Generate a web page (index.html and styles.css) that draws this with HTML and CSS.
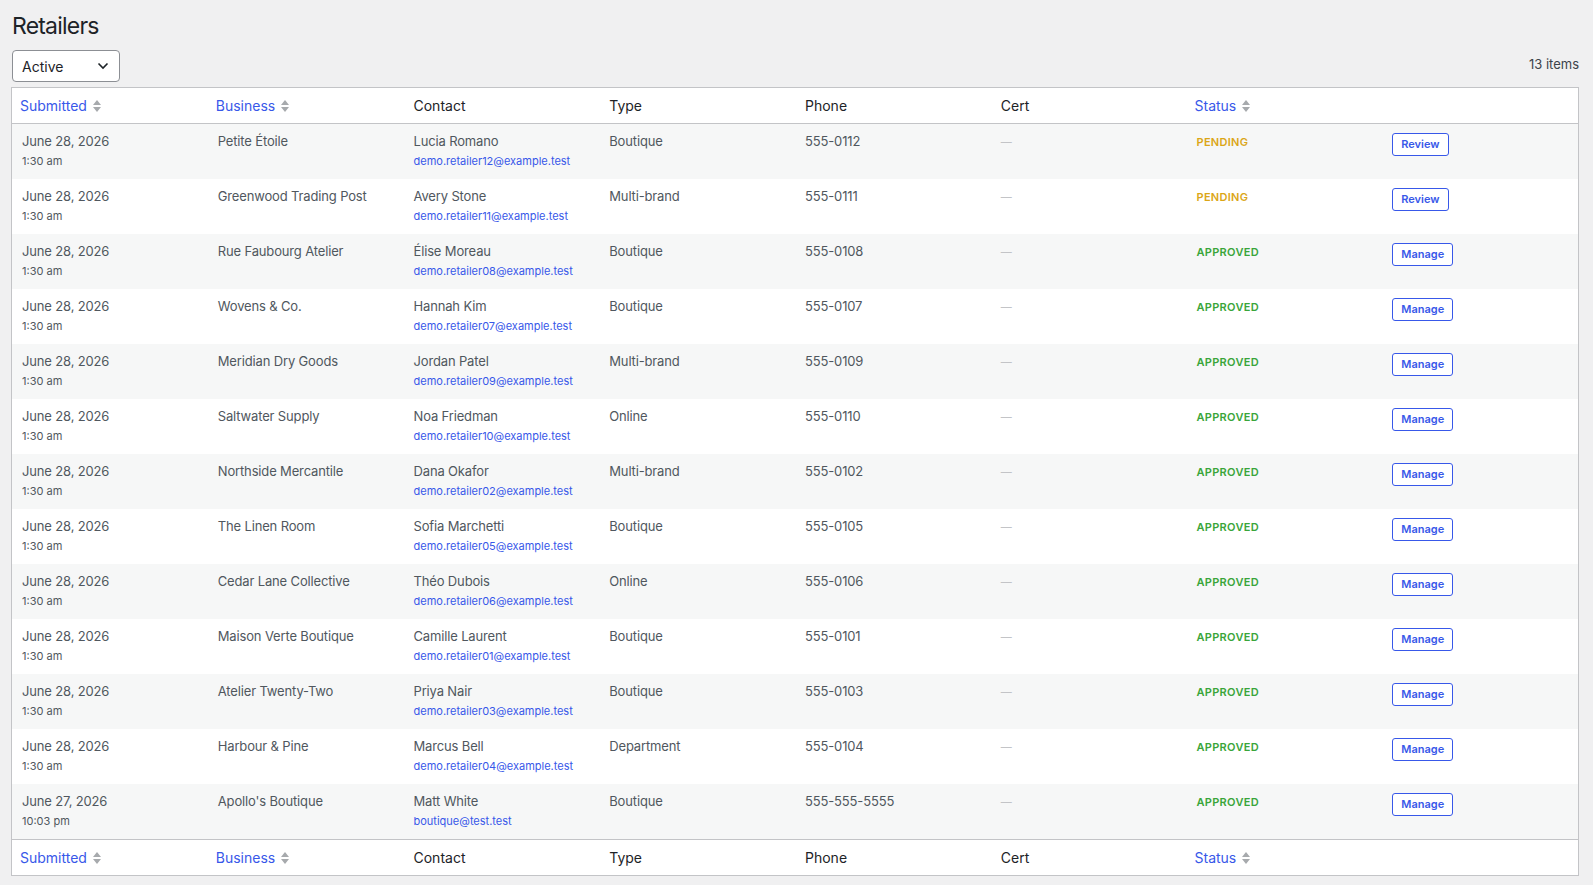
FILE: index.html
```html
<!DOCTYPE html>
<html lang="en">
<head>
    <meta charset="UTF-8">
    <title>Retailers</title>
    <link rel="stylesheet" href="styles.css">
</head>
<body>
    <div class="wrap">
        <h1>Retailers</h1>

        <div class="toolbar">
            <div class="select">
                <span>Active</span>
                <svg width="12" height="8" viewBox="0 0 12 8"><path d="M1.5 1.5 L6 6 L10.5 1.5" fill="none" stroke="#1d2327" stroke-width="1.6"/></svg>
            </div>
            <div class="count">13 items</div>
        </div>

        <table class="list">
            <thead>
                <tr>
                    <th class="sortable"><a href="#">Submitted <svg class="sort" width="8" height="12" viewBox="0 0 8 12"><path d="M4 0 L8 5 L0 5 Z M0 7 L8 7 L4 12 Z" fill="#a7aaad"/></svg></a></th>
                    <th class="sortable"><a href="#">Business <svg class="sort" width="8" height="12" viewBox="0 0 8 12"><path d="M4 0 L8 5 L0 5 Z M0 7 L8 7 L4 12 Z" fill="#a7aaad"/></svg></a></th>
                    <th>Contact</th>
                    <th>Type</th>
                    <th>Phone</th>
                    <th>Cert</th>
                    <th class="sortable"><a href="#">Status <svg class="sort" width="8" height="12" viewBox="0 0 8 12"><path d="M4 0 L8 5 L0 5 Z M0 7 L8 7 L4 12 Z" fill="#a7aaad"/></svg></a></th>
                    <th></th>
                </tr>
            </thead>
            <tbody id="rows"></tbody>
            <tfoot>
                <tr>
                    <th class="sortable"><a href="#">Submitted <svg class="sort" width="8" height="12" viewBox="0 0 8 12"><path d="M4 0 L8 5 L0 5 Z M0 7 L8 7 L4 12 Z" fill="#a7aaad"/></svg></a></th>
                    <th class="sortable"><a href="#">Business <svg class="sort" width="8" height="12" viewBox="0 0 8 12"><path d="M4 0 L8 5 L0 5 Z M0 7 L8 7 L4 12 Z" fill="#a7aaad"/></svg></a></th>
                    <th>Contact</th>
                    <th>Type</th>
                    <th>Phone</th>
                    <th>Cert</th>
                    <th class="sortable"><a href="#">Status <svg class="sort" width="8" height="12" viewBox="0 0 8 12"><path d="M4 0 L8 5 L0 5 Z M0 7 L8 7 L4 12 Z" fill="#a7aaad"/></svg></a></th>
                    <th></th>
                </tr>
            </tfoot>
        </table>
    </div>

    <script>
        const retailers = [
            ['June 28, 2026', '1:30 am', 'Petite Étoile', 'Lucia Romano', 'demo.retailer12@example.test', 'Boutique', '555-0112', 'pending'],
            ['June 28, 2026', '1:30 am', 'Greenwood Trading Post', 'Avery Stone', 'demo.retailer11@example.test', 'Multi-brand', '555-0111', 'pending'],
            ['June 28, 2026', '1:30 am', 'Rue Faubourg Atelier', 'Élise Moreau', 'demo.retailer08@example.test', 'Boutique', '555-0108', 'approved'],
            ['June 28, 2026', '1:30 am', 'Wovens &amp; Co.', 'Hannah Kim', 'demo.retailer07@example.test', 'Boutique', '555-0107', 'approved'],
            ['June 28, 2026', '1:30 am', 'Meridian Dry Goods', 'Jordan Patel', 'demo.retailer09@example.test', 'Multi-brand', '555-0109', 'approved'],
            ['June 28, 2026', '1:30 am', 'Saltwater Supply', 'Noa Friedman', 'demo.retailer10@example.test', 'Online', '555-0110', 'approved'],
            ['June 28, 2026', '1:30 am', 'Northside Mercantile', 'Dana Okafor', 'demo.retailer02@example.test', 'Multi-brand', '555-0102', 'approved'],
            ['June 28, 2026', '1:30 am', 'The Linen Room', 'Sofia Marchetti', 'demo.retailer05@example.test', 'Boutique', '555-0105', 'approved'],
            ['June 28, 2026', '1:30 am', 'Cedar Lane Collective', 'Théo Dubois', 'demo.retailer06@example.test', 'Online', '555-0106', 'approved'],
            ['June 28, 2026', '1:30 am', 'Maison Verte Boutique', 'Camille Laurent', 'demo.retailer01@example.test', 'Boutique', '555-0101', 'approved'],
            ['June 28, 2026', '1:30 am', 'Atelier Twenty-Two', 'Priya Nair', 'demo.retailer03@example.test', 'Boutique', '555-0103', 'approved'],
            ['June 28, 2026', '1:30 am', 'Harbour &amp; Pine', 'Marcus Bell', 'demo.retailer04@example.test', 'Department', '555-0104', 'approved'],
            ['June 27, 2026', '10:03 pm', "Apollo's Boutique", 'Matt White', 'boutique@test.test', 'Boutique', '555-555-5555', 'approved']
        ];

        const tbody = document.getElementById('rows');
        tbody.innerHTML = retailers.map(r => `
            <tr>
                <td>${r[0]}<div class="sub">${r[1]}</div></td>
                <td>${r[2]}</td>
                <td>${r[3]}<div class="sub"><a class="email" href="#">${r[4]}</a></div></td>
                <td>${r[5]}</td>
                <td>${r[6]}</td>
                <td><span class="dash">—</span></td>
                <td><span class="status ${r[7]}">${r[7]}</span></td>
                <td><a class="btn" href="#">${r[7] === 'pending' ? 'Review' : 'Manage'}</a></td>
            </tr>`).join('');
    </script>
</body>
</html>
```

FILE: styles.css
```css
:root {
    --link: #3858e9;
    --text: #50575e;
    --heading: #1d2327;
    --border: #c3c4c7;
}

body {
    margin: 0;
    background: #f0f0f1;
    font-family: Inter, 'Noto Sans', sans-serif;
    color: var(--text);
}

.wrap {
    padding: 0 14px 0 11px;
}

h1 {
    margin: 0;
    padding: 11px 0 0 1px;
    font-size: 23px;
    font-weight: 400;
    line-height: 30px;
    letter-spacing: -0.8px;
    color: var(--heading);
}

.toolbar {
    display: flex;
    justify-content: space-between;
    align-items: center;
    margin-top: 9px;
    margin-bottom: 5px;
}

.select {
    display: flex;
    justify-content: space-between;
    align-items: center;
    box-sizing: border-box;
    width: 108px;
    height: 32px;
    margin-left: 1px;
    padding: 0 10px 0 9px;
    background: #fff;
    border: 1px solid #8c8f94;
    border-radius: 4px;
    font-size: 14px;
    color: var(--heading);
}

.count {
    font-size: 13px;
    color: #3c434a;
    margin-top: -4px;
}

.list {
    width: 100%;
    table-layout: fixed;
    border-spacing: 0;
    background: #fff;
    border: 1px solid var(--border);
}

.list th {
    text-align: left;
    font-weight: 400;
    font-size: 14px;
    line-height: 19px;
    color: var(--heading);
    padding: 8px 10px;
}

.list thead th {
    border-bottom: 1px solid var(--border);
}

.list tfoot th {
    border-top: 1px solid var(--border);
}

.list th.sortable {
    padding: 8px;
}

.list th a {
    color: var(--link);
    text-decoration: none;
    display: inline-flex;
    align-items: center;
    gap: 6px;
}

.sort {
    margin-top: 1px;
}

.list td {
    height: 55px;
    box-sizing: border-box;
    vertical-align: top;
    padding: 8px 10px 0;
    font-size: 13px;
    line-height: 19.5px;
    letter-spacing: -0.15px;
}

.list tbody tr:nth-child(odd) td {
    background: #f6f7f7;
}

.sub {
    font-size: 11px;
    line-height: 18px;
    letter-spacing: 0;
}

.email {
    color: var(--link);
    text-decoration: none;
}

.dash {
    color: var(--border);
    font-size: 11px;
}

.status {
    text-transform: uppercase;
    font-size: 11px;
    font-weight: 600;
    letter-spacing: 0.3px;
}

.status.pending {
    color: #dba617;
}

.status.approved {
    color: #3aa53a;
}

.btn {
    display: inline-block;
    box-sizing: border-box;
    height: 23px;
    line-height: 21px;
    margin-top: 1px;
    padding: 0 8px;
    border: 1px solid var(--link);
    border-radius: 3px;
    font-size: 11px;
    font-weight: 600;
    letter-spacing: 0;
    color: var(--link);
    text-decoration: none;
    background: #fff;
}
```
